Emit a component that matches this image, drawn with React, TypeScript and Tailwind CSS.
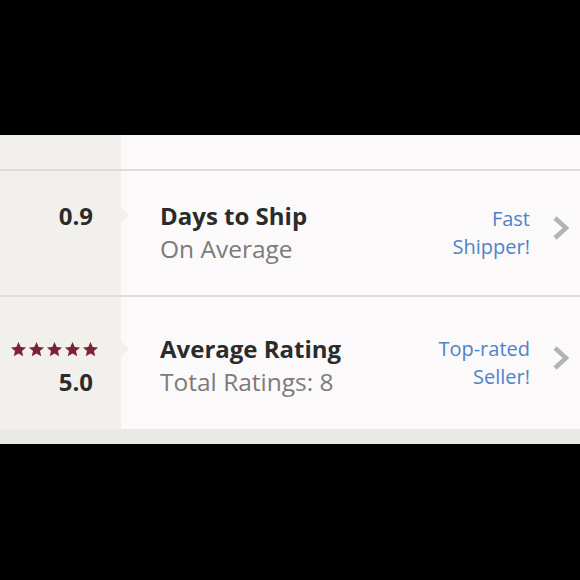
const font = { fontFamily: '"Open Sans", Lato, sans-serif' };

function Star() {
  return (
    <svg viewBox="0 0 24 24" className="w-[17px] h-[17px]" fill="#7d2135">
      <path d="M12 1.5l3.1 7.1 7.6.6-5.8 5 1.8 7.5L12 17.7l-6.7 4 1.8-7.5-5.8-5 7.6-.6z" />
    </svg>
  );
}

function Chevron() {
  return (
    <svg viewBox="0 0 18 26" className="w-[18px] h-[26px] shrink-0 mb-[10px]" fill="none">
      <path d="M3 3l11 10L3 23" stroke="#b3b3b3" strokeWidth="4.5" />
    </svg>
  );
}

function StatRow({
  top,
  bottom,
  title,
  subtitle,
  badge,
  height,
  shift,
}: {
  top: React.ReactNode;
  bottom: React.ReactNode;
  title: string;
  subtitle: string;
  badge: string[];
  height: string;
  shift: string;
}) {
  return (
    <div className={`flex ${height}`}>
      <div className={`w-[121px] bg-[#f2f0ed] flex flex-col items-end justify-center pr-[28px] ${shift}`}>
        <div className="h-[32px] flex items-center">{top}</div>
        <div className="h-[34px] flex items-center">{bottom}</div>
      </div>
      <div className="flex-1 bg-[#fbf9f9] flex items-center pl-[39px] pr-[10px]">
        <div className={`flex-1 flex flex-col ${shift}`}>
          <div className="text-[24px] font-bold text-[#2b2b2b] leading-[32px]">{title}</div>
          <div className="text-[24.5px] text-[#7b7b7b] leading-[34px]">{subtitle}</div>
        </div>
        <div className="flex flex-col items-end text-[20px] text-[#4f83c9] leading-[28px] mr-[22px]">
          {badge.map((b) => (
            <span key={b}>{b}</span>
          ))}
        </div>
        <Chevron />
      </div>
    </div>
  );
}

export default function App() {
  return (
    <div className="w-[580px] h-[580px] bg-black flex flex-col" style={font}>
      <div className="h-[135px]" />
      <div className="flex h-[34px]">
        <div className="w-[121px] bg-[#f2f0ed]" />
        <div className="flex-1 bg-[#fbf9f9]" />
      </div>
      <div className="h-[2px] bg-[#dfdddc]" />
      <div className="relative">
        <StatRow
          height="h-[124px]"
          shift=""
          top={<div className="text-[24px] font-bold text-[#2b2b2b]">0.9</div>}
          bottom={null}
          title="Days to Ship"
          subtitle="On Average"
          badge={['Fast', 'Shipper!']}
        />
        <div className="absolute left-[121px] top-[36px] w-0 h-0 border-y-[8px] border-y-transparent border-l-[8px] border-l-[#f2f0ed]" />
      </div>
      <div className="h-[2px] bg-[#dfdddc]" />
      <div className="relative">
        <StatRow
          height="h-[132px]"
          shift="pt-[6px]"
          top={
            <div className="flex gap-[1px] -mr-[6px]">
              <Star />
              <Star />
              <Star />
              <Star />
              <Star />
            </div>
          }
          bottom={<div className="text-[24px] font-bold text-[#2b2b2b]">5.0</div>}
          title="Average Rating"
          subtitle="Total Ratings: 8"
          badge={['Top-rated', 'Seller!']}
        />
        <div className="absolute left-[121px] top-[44px] w-0 h-0 border-y-[8px] border-y-transparent border-l-[8px] border-l-[#f2f0ed]" />
      </div>
      <div className="h-[15px] bg-[#ebe9e5]" />
    </div>
  );
}
